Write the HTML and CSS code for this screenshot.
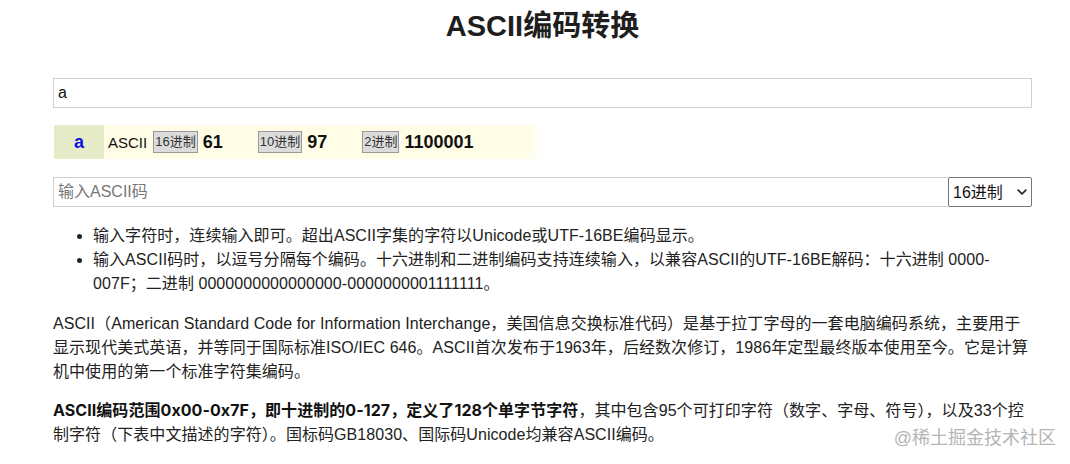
FILE: index.html
```html
<!DOCTYPE html>
<html lang="zh-CN">
<head>
<meta charset="utf-8">
<title>ASCII编码转换</title>
<link rel="stylesheet" href="styles.css">
</head>
<body>
<h1 class="title">ASCII编码转换</h1>
<input class="field" type="text" value="a">
<div class="result">
  <span class="char">a</span>
  <span class="code-name">ASCII</span>
  <span class="group"><span class="tag">16进制</span><b class="num">61</b></span>
  <span class="group"><span class="tag">10进制</span><b class="num">97</b></span>
  <span class="group"><span class="tag">2进制</span><b class="num">1100001</b></span>
</div>
<div class="decode">
  <input class="field decode-input" type="text" placeholder="输入ASCII码">
  <div class="select-wrap">
    <select class="base">
      <option>16进制</option>
      <option>10进制</option>
      <option>2进制</option>
    </select>
    <svg class="chev" width="10" height="7" viewBox="0 0 10 7"><path d="M1.2 1.2 L5 5 L8.8 1.2" fill="none" stroke="#222" stroke-width="1.7" stroke-linecap="round" stroke-linejoin="round"/></svg>
  </div>
</div>
<ul class="tips">
  <li>输入字符时，连续输入即可。超出ASCII字集的字符以Unicode或UTF-16BE编码显示。</li>
  <li>输入ASCII码时，以逗号分隔每个编码。十六进制和二进制编码支持连续输入，以兼容ASCII的UTF-16BE解码：十六进制 0000-007F；二进制 0000000000000000-0000000001111111。</li>
</ul>
<p class="para">ASCII（American Standard Code for Information Interchange，美国信息交换标准代码）是基于拉丁字母的一套电脑编码系统，主要用于显示现代美式英语，并等同于国际标准ISO/IEC 646。ASCII首次发布于1963年，后经数次修订，1986年定型最终版本使用至今。它是计算机中使用的第一个标准字符集编码。</p>
<p class="para para-2"><strong>ASCII编码范围0x00-0x7F，即十进制的0-127，定义了128个单字节字符</strong>，其中包含95个可打印字符（数字、字母、符号），以及33个控制字符（下表中文描述的字符）。国标码GB18030、国际码Unicode均兼容ASCII编码。</p>
<div class="watermark">@稀土掘金技术社区</div>
</body>
</html>
```
FILE: styles.css
```css
html, body {
  margin: 0;
  background: #fff;
}
body {
  position: relative;
  padding: 6px 38px 0 53px;
  height: 464px;
  box-sizing: border-box;
  overflow: hidden;
  font-family: "Liberation Sans", "Noto Sans CJK SC", sans-serif;
  font-size: 16px;
  color: #222;
}
.title {
  margin: 0;
  height: 40px;
  line-height: 40px;
  font-size: 29px;
  font-weight: bold;
  text-align: center;
  color: #1e1e1e;
}
.field {
  display: block;
  width: 100%;
  box-sizing: border-box;
  height: 30px;
  margin: 32px 0 0;
  padding: 0 4px;
  border: 1px solid #cfcfcf;
  border-radius: 0;
  font-family: "Liberation Sans", "Noto Sans CJK SC", sans-serif;
  font-size: 16px;
  color: #111;
  background: #fff;
  outline: none;
}
.field::placeholder {
  color: #777;
}
.result {
  display: flex;
  align-items: center;
  width: 488px;
  height: 34px;
  margin: 17px 0 0 1px;
  background: linear-gradient(to right, #fffde6 0, #fffde6 97%, #ffffff 100%);
}
.char {
  align-self: stretch;
  width: 50px;
  display: flex;
  align-items: center;
  justify-content: center;
  background: #e7ecc8;
  color: #1111dd;
  font-weight: bold;
  font-size: 18px;
}
.code-name {
  margin: 0 6px 0 4px;
  font-size: 15px;
  color: #111;
}
.group {
  display: flex;
  align-items: center;
  margin-right: 35px;
}
.tag {
  height: 20px;
  line-height: 20px;
  padding: 0 1px;
  border: 1px solid #999;
  background: #dcdcdc;
  font-size: 13px;
  color: #333;
  margin-right: 5px;
}
.num {
  font-size: 18px;
  color: #111;
}
.decode {
  display: flex;
  margin-top: 18px;
}
.decode-input {
  flex: 1;
  margin: 0;
  border-right: none;
}
.select-wrap {
  position: relative;
  width: 84px;
  height: 30px;
}
.base {
  appearance: none;
  -webkit-appearance: none;
  width: 100%;
  height: 100%;
  box-sizing: border-box;
  margin: 0;
  padding: 0 0 0 4px;
  border: 1px solid #767676;
  border-radius: 2px;
  background: #fff;
  font-family: "Liberation Sans", "Noto Sans CJK SC", sans-serif;
  font-size: 16px;
  color: #111;
}
.chev {
  position: absolute;
  right: 5px;
  top: 12px;
  pointer-events: none;
}
.tips {
  margin: 17px 0 0;
  padding-left: 40px;
  line-height: 24px;
  letter-spacing: 0.06px;
}
.para {
  margin: 16px 0 0;
  line-height: 24px;
  letter-spacing: 0.06px;
}
.para-2 {
  margin-top: 14px;
}
.para strong {
  font-family: "Inter", "Noto Sans CJK SC", sans-serif;
  font-weight: bold;
  color: #111;
}
.watermark {
  position: absolute;
  right: 14px;
  bottom: 14px;
  font-size: 18px;
  line-height: 24px;
  color: #b5b5b5;
}
```
